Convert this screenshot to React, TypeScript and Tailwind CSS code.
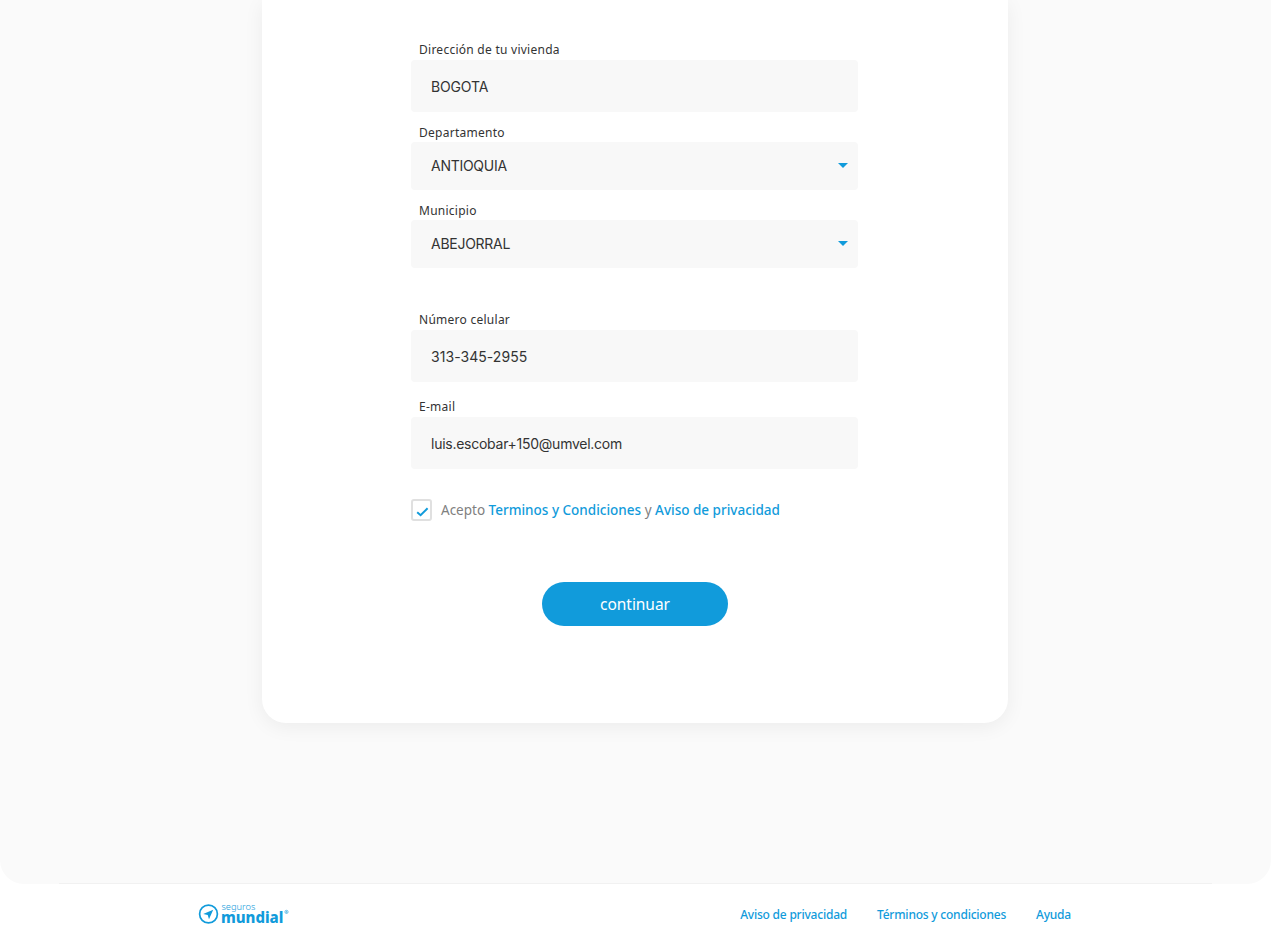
import { useState } from 'react'
import type { ReactNode } from 'react'

const labelClass = "block pl-2 h-[22px] text-[12px] tracking-[0.26px] whitespace-nowrap text-[#333]"
const fieldClass = "w-full pl-5 rounded bg-[#f8f8f8] font-['Inter',sans-serif] text-[14px] text-[#333] outline-none"
const footerLinkClass = "text-[12px] leading-4 tracking-[-0.22px] font-medium whitespace-nowrap text-[#119bdb]"

interface FieldProps {
  label: string
  className?: string
  labelLeading?: string
  children: ReactNode
}

function Field({ label, className = '', labelLeading = 'leading-[24px]', children }: FieldProps) {
  return (
    <label className={`block ${className}`}>
      <span className={`${labelClass} ${labelLeading}`}>{label}</span>
      {children}
    </label>
  )
}

interface TextInputProps {
  type?: string
  initial: string
  className?: string
}

function TextInput({ type = 'text', initial, className = '' }: TextInputProps) {
  const [value, setValue] = useState(initial)
  return (
    <input
      type={type}
      value={value}
      onChange={e => setValue(e.target.value)}
      className={`block h-[52px] ${fieldClass} ${className}`}
    />
  )
}

function SelectBox({ value }: { value: string }) {
  return (
    <button type="button" className={`flex h-12 items-center justify-between pr-2.5 pb-0.5 text-left tracking-[-0.27px] ${fieldClass}`}>
      {value}
      <svg width="10" height="5" viewBox="0 0 10 5" fill="#119bdb">
        <path d="M0 0h10L5 5z" />
      </svg>
    </button>
  )
}

function Logo() {
  return (
    <svg width="92" height="24" viewBox="0 0 92 24" className="overflow-visible" fill="#119bdb">
      <circle cx="10.5" cy="11" r="8.9" fill="none" stroke="#119bdb" strokeWidth="1.7" />
      <path d="M15.2 6.7 5.2 11l4.5 1.1 1.3 4.2z" />
      <text x="23.4" y="6.8" fontSize="9" textLength="34" lengthAdjust="spacingAndGlyphs" fontFamily="Noto Sans, sans-serif" fontWeight="300">seguros</text>
      <text x="22.9" y="20" fontSize="15.5" textLength="62.5" lengthAdjust="spacingAndGlyphs" fontFamily="Noto Sans, sans-serif" fontWeight="800">mundial</text>
      <circle cx="88.5" cy="8.9" r="1.6" fill="none" stroke="#119bdb" strokeWidth=".6" />
      <circle cx="88.5" cy="8.9" r=".6" />
    </svg>
  )
}

export default function App() {
  const [accepted, setAccepted] = useState(true)

  return (
    <div className="h-[945px] overflow-hidden bg-white font-['Noto_Sans',sans-serif]">
      <main className="flex h-[884px] flex-col items-center rounded-b-[24px] bg-[#fafafa]">
        <form className="mr-px h-[723px] w-[746px] rounded-b-[24px] bg-white pl-[149px] pt-[38px] shadow-[0_4px_20px_rgba(0,0,0,0.06)]">
          <div className="w-[447px]">
            <Field label="Dirección de tu vivienda">
              <TextInput initial="BOGOTA" className="pt-px tracking-[-0.15px]" />
            </Field>
            <Field label="Departamento" className="mt-2" labelLeading="leading-[26px]">
              <SelectBox value="ANTIOQUIA" />
            </Field>
            <Field label="Municipio" className="mt-2" labelLeading="leading-[26px]">
              <SelectBox value="ABEJORRAL" />
            </Field>
            <Field label="Número celular" className="mt-10">
              <TextInput type="tel" initial="313-345-2955" className="tracking-[0.05px]" />
            </Field>
            <Field label="E-mail" className="mt-[13px]">
              <TextInput type="email" initial="luis.escobar+150@umvel.com" className="tracking-[-0.26px]" />
            </Field>

            {/* Términos */}
            <div className="mt-[30px] flex h-[22px] items-center">
              <button
                type="button"
                role="checkbox"
                aria-checked={accepted}
                aria-label="Acepto"
                onClick={() => setAccepted(v => !v)}
                className="mr-[9px] flex h-[22px] w-[21px] items-center justify-center rounded-[3px] border-2 border-[#e0e0e0] bg-white"
              >
                {accepted && (
                  <svg width="13" height="12" viewBox="0 0 13 12" className="mt-[3px] ml-px shrink-0" fill="none" stroke="#119bdb" strokeWidth="2">
                    <path d="M1.2 6.2 4.6 9.2 11.6 2.3" />
                  </svg>
                )}
              </button>
              <p className="whitespace-nowrap text-[13.5px] text-[#808080]">
                Acepto <a className="font-medium text-[#119bdb]">Terminos y Condiciones</a> y <a className="font-medium text-[#119bdb]">Aviso de privacidad</a>
              </p>
            </div>

            <button type="button" className="ml-[131px] mt-[61px] block h-11 w-[186px] rounded-full bg-[#119bdb] pt-0.5 text-[15.5px] tracking-[-0.05px] text-white">
              continuar
            </button>
          </div>
        </form>
      </main>

      <footer className="relative mx-auto -mt-px h-[62px] w-[1153px] border-t border-[#f1f1f1]">
        <div className="flex h-[61px] items-center justify-between pl-[139px] pr-[141px]">
          <Logo />
          <nav className="flex gap-[30px]">
            <a className={footerLinkClass}>Aviso de privacidad</a>
            <a className={footerLinkClass}>Términos y condiciones</a>
            <a className={footerLinkClass}>Ayuda</a>
          </nav>
        </div>
      </footer>
    </div>
  )
}
